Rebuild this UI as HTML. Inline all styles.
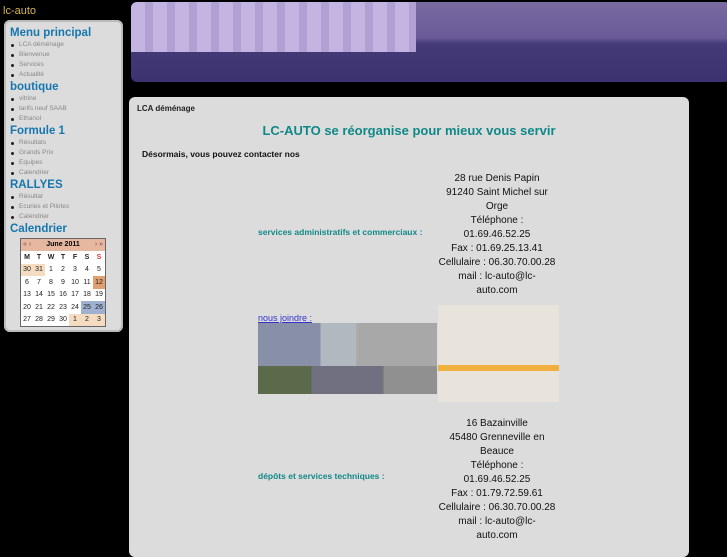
<!DOCTYPE html>
<html><head><meta charset="utf-8"><style>
body{margin:0;background:#000;width:727px;height:545px;overflow:hidden;position:relative;font-family:"Liberation Sans",sans-serif}
.logo{position:absolute;left:3px;top:5px;color:#d8b45a;font-size:11px}
.side{position:absolute;left:4px;top:20px;width:119px;height:312px;background:#dcdcdc;border-radius:6px;box-shadow:inset 0 0 0 2px #bbb}
.side h2{margin:0;color:#1677b0;font-size:11.5px;font-weight:bold;line-height:14px;padding-left:6px}
.side ul{margin:0;padding:0 0 0 15px;list-style:none}
.side li{font-size:6.5px;color:#888;line-height:10px;position:relative}
.side li:before{content:"";position:absolute;left:-8px;top:4px;width:3px;height:3px;background:#222;border-radius:50%}
.cal{position:absolute;left:16px;top:218px;width:84px;border:1px solid #666;background:#fff;font-size:7px}
.cal .t{background:#e6b8a0;height:12px;text-align:center;font-weight:bold;line-height:12px;position:relative}
.cal table{border-collapse:collapse;width:100%}
.cal td{text-align:center;height:12.5px;padding:0;width:12px;color:#222}
.o{background:#f5dcc0}.r{background:#e0a070}.b{background:#9fb0d0}
.hdr{position:absolute;left:131px;top:2px;width:600px;height:80px;border-radius:6px;background:linear-gradient(#7a6aa0,#6a5a98 45%,#443a78 52%,#3c3270 100%)}
.hdr:before{content:"";position:absolute;left:0;top:0;width:285px;height:50px;border-radius:6px 0 0 0;background:repeating-linear-gradient(90deg,#c4b4e2 0 14px,#b0a0d4 14px 22px)}
.main{position:absolute;left:129px;top:97px;width:560px;height:460px;background:#dcdcdc;border-radius:6px}
.crumb{position:absolute;left:8px;top:7px;font-size:8px;font-weight:bold;color:#222}
.title{position:absolute;left:0;width:560px;top:26px;text-align:center;color:#108888;font-size:13px;font-weight:bold}
.des{position:absolute;left:13px;top:52px;font-size:8.5px;font-weight:bold;color:#111}
.lab{position:absolute;left:129px;font-size:8.5px;font-weight:bold;color:#108888}
.addr{position:absolute;left:305px;width:126px;text-align:center;font-size:10px;line-height:14px;color:#111}
.join{position:absolute;left:129px;top:216px;font-size:9px;color:#33c;text-decoration:underline}
.street{position:absolute;left:129px;top:226px;width:179px;height:71px;background:linear-gradient(90deg,#8890a8 0 35%,#b0b8c0 35% 55%,#a8a8a8 55%);}
.street:after{content:"";position:absolute;left:0;bottom:0;width:100%;height:28px;background:linear-gradient(90deg,#5a6a4a 0 30%,#707080 30% 70%,#909090 70%)}
.map{position:absolute;left:309px;top:208px;width:121px;height:97px;background:#e8e4dc}
.map:after{content:"";position:absolute;left:0;top:60px;width:100%;height:6px;background:#f0b040}
</style></head><body>
<div class="logo">lc-auto</div>
<div class="side">
<div style="height:6px"></div>
<h2>Menu principal</h2><ul><li>LCA déménage</li><li>Bienvenue</li><li>Services</li><li>Actualité</li></ul>
<h2>boutique</h2><ul><li>vitrine</li><li>tarifs neuf SAAB</li><li>Ethanol</li></ul>
<h2>Formule 1</h2><ul><li>Résultats</li><li>Grands Prix</li><li>Equipes</li><li>Calendrier</li></ul>
<h2>RALLYES</h2><ul><li>Résultat</li><li>Ecuries et Pilotes</li><li>Calendrier</li></ul>
<h2>Calendrier</h2>
<div class="cal"><div class="t"><span style="position:absolute;left:2px;color:#a66">« ‹</span>June 2011<span style="position:absolute;right:2px;color:#a66">› »</span></div>
<table><tr style="font-weight:bold"><td>M</td><td>T</td><td>W</td><td>T</td><td>F</td><td>S</td><td style="color:#d33">S</td></tr>
<tr><td class="o">30</td><td class="o">31</td><td>1</td><td>2</td><td>3</td><td>4</td><td>5</td></tr>
<tr><td>6</td><td>7</td><td>8</td><td>9</td><td>10</td><td>11</td><td class="r">12</td></tr>
<tr><td>13</td><td>14</td><td>15</td><td>16</td><td>17</td><td>18</td><td>19</td></tr>
<tr><td>20</td><td>21</td><td>22</td><td>23</td><td>24</td><td class="b">25</td><td class="b">26</td></tr>
<tr><td>27</td><td>28</td><td>29</td><td>30</td><td class="o">1</td><td class="o">2</td><td class="o">3</td></tr></table></div>
</div>
<div class="hdr"></div>
<div class="main">
<div class="crumb">LCA déménage</div>
<div class="title">LC-AUTO se réorganise pour mieux vous servir</div>
<div class="des">Désormais, vous pouvez contacter nos</div>
<div class="addr" style="top:75px">28 rue Denis Papin<br>91240 Saint Michel sur<br>Orge<br>Téléphone :<br>01.69.46.52.25<br>Fax : 01.69.25.13.41<br>Cellulaire : 06.30.70.00.28<br>mail : lc-auto@lc-<br>auto.com</div>
<div class="lab" style="top:130px">services administratifs et commerciaux :</div>
<div class="join">nous joindre :</div>
<div class="street"></div>
<div class="map"></div>
<div class="addr" style="top:320px">16 Bazainville<br>45480 Grenneville en<br>Beauce<br>Téléphone :<br>01.69.46.52.25<br>Fax : 01.79.72.59.61<br>Cellulaire : 06.30.70.00.28<br>mail : lc-auto@lc-<br>auto.com</div>
<div class="lab" style="top:374px">dépôts et services techniques :</div>
</div>
</body></html>
